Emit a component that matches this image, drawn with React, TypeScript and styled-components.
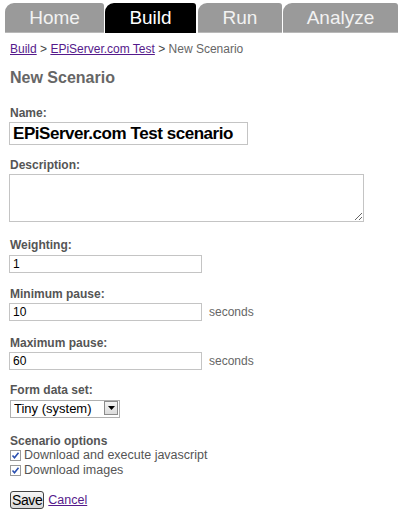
import React from "react";
import styled, { createGlobalStyle } from "styled-components";

const Global = createGlobalStyle`
  html, body { margin: 0; padding: 0; background: #fff; }
  body { font-family: "Liberation Sans", Arial, sans-serif; }
`;

const Page = styled.div`
  width: 401px;
  height: 513px;
  overflow: hidden;
  background: #fff;
`;

const Tabs = styled.nav`
  display: flex;
  gap: 1px;
  padding: 3px 0 0 5px;
  height: 30px;
`;

const Tab = styled.div<{ $active?: boolean; $w: number }>`
  width: ${(p) => p.$w}px;
  height: 30px;
  box-sizing: border-box;
  display: flex;
  align-items: center;
  justify-content: center;
  background: ${(p) => (p.$active ? "#000" : "#9a9a9a")};
  color: ${(p) => (p.$active ? "#fff" : "#f2f2f2")};
  font-size: 19px;
  border-radius: 9px 3px 0 0;
  border-bottom: 1px solid ${(p) => (p.$active ? "#000" : "#b8b8b8")};
  margin-right: ${(p) => (p.$active ? 1 : 0)}px;
`;

const Content = styled.main`
  padding: 8px 0 0 10px;
`;

const Crumbs = styled.div`
  font-size: 12px;
  line-height: 14px;
  color: #444;
  margin-top: 1px;
`;

const Link = styled.a`
  color: #551a8b;
  text-decoration: underline;
`;

const Current = styled.span`
  color: #666;
`;

const Heading = styled.h1`
  margin: 13px 0 19px;
  font-size: 16px;
  line-height: 18px;
  font-weight: bold;
  color: #666;
`;

const Field = styled.div<{ $mb: number }>`
  margin-bottom: ${(p) => p.$mb}px;
`;

const Label = styled.label`
  display: block;
  font-size: 12px;
  line-height: 14px;
  font-weight: bold;
  color: #555;
  margin-bottom: 2px;
`;

const Row = styled.div`
  display: flex;
  align-items: center;
  gap: 7px;
`;

const Input = styled.input<{ $w: number; $h: number; $big?: boolean }>`
  box-sizing: border-box;
  width: ${(p) => p.$w}px;
  height: ${(p) => p.$h}px;
  margin: 0 0 0 -1px;
  padding: 0 3px;
  border: 1px solid #c4c4c4;
  border-radius: 0;
  outline: none;
  font-family: "Liberation Sans", Arial, sans-serif;
  font-size: ${(p) => (p.$big ? 17 : 12)}px;
  letter-spacing: ${(p) => (p.$big ? -0.45 : 0)}px;
  font-weight: ${(p) => (p.$big ? "bold" : "normal")};
  color: #000;
  background: #fff;
`;

const TextArea = styled.textarea`
  display: block;
  box-sizing: border-box;
  width: 355px;
  height: 48px;
  margin: 0 0 0 -1px;
  border: 1px solid #c4c4c4;
  border-radius: 0;
  resize: both;
  font-family: "Liberation Sans", Arial, sans-serif;
  font-size: 12px;
`;

const Unit = styled.span`
  font-size: 12px;
  color: #666;
`;

const SelectBox = styled.div`
  position: relative;
  width: 110px;
  height: 18px;
`;

const Select = styled.select`
  appearance: none;
  box-sizing: border-box;
  width: 110px;
  height: 18px;
  margin: 0;
  padding: 0 0 0 3px;
  border: 1px solid #b0b0b0;
  border-radius: 0;
  background: #fff;
  font-family: "Liberation Sans", Arial, sans-serif;
  font-size: 13px;
  color: #000;
  outline: none;
`;

const Arrow = styled.span`
  position: absolute;
  right: 2px;
  top: 2px;
  width: 14px;
  height: 14px;
  box-sizing: border-box;
  border: 1px solid #8c8c8c;
  background: linear-gradient(#f4f4f4, #dcdcdc);
  display: flex;
  align-items: center;
  justify-content: center;
  pointer-events: none;
`;

const OptionsTitle = styled.div`
  font-size: 12px;
  line-height: 14px;
  font-weight: bold;
  color: #555;
  margin-bottom: 0;
`;

const Check = styled.label`
  display: flex;
  align-items: center;
  font-size: 12.5px;
  line-height: 15px;
  color: #555;
`;

const Box = styled.span`
  width: 11px;
  height: 11px;
  box-sizing: border-box;
  border: 1px solid #9a9a9a;
  background: #fff;
  margin-right: 3px;
  display: flex;
  align-items: center;
  justify-content: center;
`;

const Actions = styled.div`
  display: flex;
  align-items: center;
  gap: 4px;
  margin-top: 13px;
`;

const Button = styled.button`
  box-sizing: border-box;
  height: 18px;
  padding: 0 1px;
  border: 1px solid #444;
  border-radius: 3px;
  background: linear-gradient(#f6f6f6, #d8d8d8);
  font-family: "Liberation Sans", Arial, sans-serif;
  font-size: 14px;
  letter-spacing: -0.4px;
  line-height: 14px;
  color: #000;
`;

const CancelLink = styled(Link)`
  font-size: 12.5px;
`;

const Checkbox = ({ children }: { children: React.ReactNode }) => (
  <Check>
    <Box>
      <svg width="9" height="9" viewBox="0 0 9 9">
        <path d="M1.5 4.5 L3.5 6.8 L7.5 1.8" stroke="#2a4fb0" strokeWidth="1.6" fill="none" />
      </svg>
    </Box>
    {children}
  </Check>
);

export default function App() {
  return (
    <Page>
      <Global />
      <Tabs>
        <Tab $w={99}>Home</Tab>
        <Tab $w={91} $active>Build</Tab>
        <Tab $w={84}>Run</Tab>
        <Tab $w={115}>Analyze</Tab>
      </Tabs>
      <Content>
        <Crumbs>
          <Link href="#">Build</Link> &gt; <Link href="#">EPiServer.com Test</Link> &gt;{" "}
          <Current>New Scenario</Current>
        </Crumbs>
        <Heading>New Scenario</Heading>
        <Field $mb={13}>
          <Label>Name:</Label>
          <Input $w={239} $h={23} $big defaultValue="EPiServer.com Test scenario" />
        </Field>
        <Field $mb={16}>
          <Label>Description:</Label>
          <TextArea />
        </Field>
        <Field $mb={14}>
          <Label>Weighting:</Label>
          <Input $w={193} $h={18} defaultValue="1" />
        </Field>
        <Field $mb={15}>
          <Label>Minimum pause:</Label>
          <Row>
            <Input $w={193} $h={18} defaultValue="10" />
            <Unit>seconds</Unit>
          </Row>
        </Field>
        <Field $mb={13}>
          <Label>Maximum pause:</Label>
          <Row>
            <Input $w={193} $h={18} defaultValue="60" />
            <Unit>seconds</Unit>
          </Row>
        </Field>
        <Field $mb={17}>
          <Label>Form data set:</Label>
          <SelectBox>
            <Select defaultValue="tiny">
              <option value="tiny">Tiny (system)</option>
            </Select>
            <Arrow>
              <svg width="7" height="4" viewBox="0 0 7 4">
                <path d="M0 0 H7 L3.5 4 Z" fill="#000" />
              </svg>
            </Arrow>
          </SelectBox>
        </Field>
        <OptionsTitle>Scenario options</OptionsTitle>
        <Checkbox>Download and execute javascript</Checkbox>
        <Checkbox>Download images</Checkbox>
        <Actions>
          <Button>Save</Button>
          <CancelLink href="#">Cancel</CancelLink>
        </Actions>
      </Content>
    </Page>
  );
}
